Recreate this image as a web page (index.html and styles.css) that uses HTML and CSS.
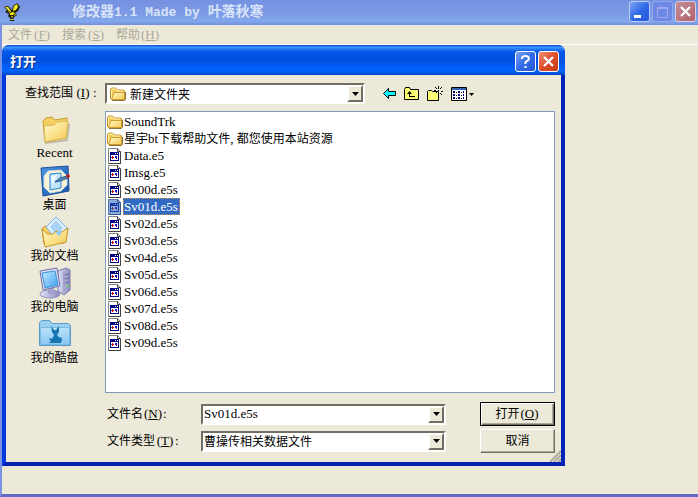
FILE: index.html
```html
<!DOCTYPE html>
<html lang="zh-CN">
<head>
<meta charset="utf-8">
<title>修改器1.1</title>
<link rel="stylesheet" href="styles.css">
</head>
<body>
<svg class="defs" aria-hidden="true">
  <defs>
    <linearGradient id="gold" x1="0" y1="0" x2="1" y2="1"><stop offset="0" stop-color="#fffbd0"/><stop offset="1" stop-color="#f5c94e"/></linearGradient>
    <linearGradient id="sky" x1="0" y1="0" x2="1" y2="1"><stop offset="0" stop-color="#c8ecff"/><stop offset="1" stop-color="#3b9eea"/></linearGradient>
    <linearGradient id="navy" x1="0" y1="0" x2="1" y2="1"><stop offset="0" stop-color="#4b95e4"/><stop offset="1" stop-color="#1653a6"/></linearGradient>
    <linearGradient id="lilac" x1="0" y1="0" x2="1" y2="0"><stop offset="0" stop-color="#e4e4fa"/><stop offset="1" stop-color="#8888bd"/></linearGradient>
    <linearGradient id="ice" x1="0" y1="0" x2="0" y2="1"><stop offset="0" stop-color="#b9e2fa"/><stop offset="1" stop-color="#8ac5f2"/></linearGradient>
    <symbol id="folder" viewBox="0 0 16 16">
      <path d="M2 14.500h12.500l1-1V6" fill="none" stroke="#8b7440"/>
      <path d="M.5 12.500V3.500l1-1.500h4l1.500 2h6.500l1 1v8.500h-13z" fill="#f4cf62" stroke="#c08e20"/>
      <path d="M1.500 12.500V4l1-1h3l1.500 2h6" fill="none" stroke="#fff2ac"/>
      <path d="M1.500 13.500L4 6.500h10.500v7z" fill="url(#gold)" stroke="#cd9c2c"/>
    </symbol>
    <symbol id="file" viewBox="0 0 16 16">
      <path d="M1.500.5h9l3 3v12h-12z" fill="#fff" stroke="#848484"/>
      <path d="M10.500.5v3h3M13.500 4v11.500h-12" fill="none" stroke="#424242"/>
      <path d="M3 4h9v9H3z" fill="#000084"/>
      <path d="M4 7h7v5H4z" fill="#fff"/>
      <path d="M8 5h1v1H8zM10 5h1v1h-1z" fill="#fff"/>
      <path d="M4 9h1v1H4z" fill="#008484"/><path d="M5 8h1v3H5z" fill="#d00000"/><path d="M6 9h1v1H6z" fill="#d00000"/>
      <path d="M8 8h2v2H8z" fill="#1010d0"/><path d="M9 10h1v1H9z" fill="#d00000"/>
    </symbol>
    <symbol id="down" viewBox="0 0 7 4"><path d="M0 0h7L3.500 4z"/></symbol>
  </defs>
</svg>

<div class="window">
  <header class="titlebar">
    <svg class="app-icon" viewBox="0 0 16 18" aria-hidden="true">
      <path d="M0 4l4-1 4 4 1-4 4-3 3 4-2 4-3 2 2 2-3 2-1 2 2 3H5l2-3-3-3 1-2-4-2 2-2z" fill="#1c1c00"/>
      <path d="M1 4l3 0 3 4 0 1-2-1zM9 7l1-4 3-2 1 3-2 3-3 1zM3 8l3 1 0 1zM6 10l3-1 2 1-2 2-3 0zM7 13l2 0-1 2zM10 12l2-1-1 2zM7 16h2v1H7z" fill="#f2e818"/>
      <path d="M11 4l2-1-1 2zM3 5l2 1v1z" fill="#fffcae"/>
    </svg>
    <h1>修改器<b>1.1 Made by </b>叶落秋寒</h1>
    <div class="caption-buttons">
      <button class="cap" aria-label="最小化"><svg viewBox="0 0 19 19"><path d="M4 13h7v3H4z" fill="#fff"/></svg></button>
      <button class="cap cap-off" aria-label="最大化" disabled><svg viewBox="0 0 19 19"><path d="M4.500 5.500h10v10h-10zM4 6.500h11" fill="none" stroke="#a2a8ee"/></svg></button>
      <button class="cap cap-dim" aria-label="关闭"><svg viewBox="0 0 19 19"><path d="M5 5l9 9M14 5l-9 9" stroke="#fff" stroke-width="2.400"/></svg></button>
    </div>
  </header>
  <nav class="menu">
    <span>文件<b class="key">(<u>F</u>)</b></span>
    <span>搜索<b class="key">(<u>S</u>)</b></span>
    <span>帮助<b class="key">(<u>H</u>)</b></span>
  </nav>

  <main class="client">
    <section class="dialog" role="dialog" aria-labelledby="dlg-title">
      <header class="dialog-title">
        <h2 id="dlg-title">打开</h2>
        <button class="cap" aria-label="帮助"><svg viewBox="0 0 19 19"><path d="M6 7V6Q6.500 4 9.500 4T13 6.500Q13 8 11 9T9.500 12" fill="none" stroke="#fff" stroke-width="2"/><path d="M8.500 14h2v2h-2z" fill="#fff"/></svg></button>
        <button class="cap cap-close" aria-label="关闭"><svg viewBox="0 0 19 19"><path d="M5 5l9 9M14 5l-9 9" stroke="#fff" stroke-width="2.400"/></svg></button>
      </header>
      <div class="dialog-body">
        <div class="lookin">
          <label for="place">查找范围<b class="key">(<u>I</u>)</b><b>:</b></label>
          <div class="combo combo-place">
            <svg class="small" aria-hidden="true"><use href="#folder"/></svg>
            <select id="place"><option>新建文件夹</option></select>
            <span class="drop"><svg><use href="#down"/></svg></span>
          </div>
          <div class="tools">
            <button aria-label="后退"><svg width="13" height="11" viewBox="0 0 13 11"><path d="M.5 5.500l5-5v3h7v4h-7v3z" fill="#0ff" stroke="#000"/></svg></button>
            <button aria-label="向上"><svg width="15" height="13" viewBox="0 0 15 13"><path d="M.5 12.500v-10l1-2h4l1 2h8v10z" fill="#ffff73" stroke="#000"/><path d="M5.500 4L3 7h2v3h6V9H6V7h2z" fill="#000"/></svg></button>
            <button aria-label="新建文件夹"><svg width="16" height="15" viewBox="0 0 16 15"><path d="M.5 14.500v-9l1-1h3l1 1h6v9z" fill="#ffff73" stroke="#000"/><path d="M11 0h1v3h-1zM11 7h1v2h-1zM7 4h2v1H7zM14 5h2v1h-2zM8 1h1v1H8zM9 2h1v1H9zM14 1h1v1h-1zM13 2h1v1h-1zM9 6h1v1H9zM13 7h1v1h-1zM14 8h1v1h-1zM11 4h1v1h-1z"/></svg></button>
            <button aria-label="查看"><svg width="24" height="14" viewBox="0 0 24 14"><path d="M.5.5h15v13H.5z" fill="#fff" stroke="#000"/><path d="M1 1h14v2H1z" fill="#3163b5"/><path d="M2 4h2v2H2zM7 4h2v2H7zM12 4h1v2h-1zM2 7h2v2H2zM7 7h2v2H7zM12 7h1v2h-1zM2 10h2v2H2zM7 10h2v2H7zM12 10h1v2h-1z" fill="#000080"/><path d="M5 5h1v1H5zM10 5h1v1h-1zM5 8h1v1H5zM10 8h1v1h-1zM5 11h1v1H5zM10 11h1v1h-1z"/><path d="M18 6h5l-2.500 3z"/></svg></button>
          </div>
        </div>

        <nav class="places">
          <a href="#recent">
            <svg viewBox="0 0 32 32"><path d="M6 29l22-3 2-16" fill="none" stroke="#8f8a73" stroke-width="2" opacity=".5"/><path d="M4 7l3-3 6-1 3 3 12-2v4L26 24 6 28z" fill="#f3cf62" stroke="#c89b2c"/><path d="M5 12l10-1 3-3 11-1-2 17L6 28z" fill="url(#gold)" stroke="#dbb44a"/></svg>
            <b>Recent</b></a>
          <a href="#desktop">
            <svg viewBox="0 0 32 32"><path d="M2 3l27-2 1 25-26 5z" fill="url(#navy)" stroke="#1c509e"/><path d="M9 6l13-1 6 6v9l-6 6-11 2-6-6V11z" fill="#fbf4d4" stroke="#c5d9e8"/><path d="M11 9l11-1v15l-11 2z" fill="#bfe4fb" stroke="#2a85dd"/><path d="M12 11l6-1-5 11z" fill="#eefaff"/><path d="M16 17l5-4 7-2 1 2-8 3z" fill="#5b94c8" stroke="#215380"/><path d="M27 10l3-1 1 3-3 1z" fill="#cd1717"/></svg>
            桌面</a>
          <a href="#documents">
            <svg viewBox="0 0 32 32"><path d="M3 13l3-3 6 2 15 0-2 15L5 28z" fill="#f2cd62" stroke="#c3902a"/><path d="M7 11L17 1l11 11-10 12z" fill="#dff1ff" stroke="#75b5ea"/><path d="M17 4l7 8-7 7-6-8z" fill="#a8d3f7"/><path d="M3 13l5 5 6 0 3-3 4 2 8-5-2 14-21 5z" fill="url(#gold)" stroke="#c89627"/><path d="M16 17l7-3-2 6z" fill="#8ac9f8"/></svg>
            我的文档</a>
          <a href="#computer">
            <svg viewBox="0 0 32 32"><path d="M19 4l8-3 4 2v20l-6 5-6-4z" fill="url(#lilac)" stroke="#7a79ac"/><path d="M25 5v21" stroke="#8c8cb8"/><path d="M26 8l4-1M26 12l4-1M26 16l4-1" stroke="#6464a0"/><path d="M28 18h2v2h-2z" fill="#5bdd53"/><ellipse cx="11" cy="27" rx="10" ry="4" fill="url(#lilac)" stroke="#9090b8"/><path d="M9 21h6l1 6H9z" fill="#a3a2cf"/><path d="M1 4l17-3 3 18-17 4z" fill="#d9d9f3" stroke="#7373a8"/><path d="M3 6l13-2 3 14-13 3z" fill="url(#sky)" stroke="#3b93dc"/></svg>
            我的电脑</a>
          <a href="#kupan">
            <svg viewBox="0 0 32 32"><path d="M.5 27.500v-23l2-2h8l3 3h16l2 2v20z" fill="#9acff2" stroke="#5a9bca"/><path d="M1.500 9.500h29v17h-29z" fill="url(#ice)" stroke="#79bae5"/><path d="M12 8l3 4h2l3-4 0 6-2 3 3 3 1-1 1 2-1 4H10l2-2-2-2 1-1 2 1 2-4-2-3z" fill="#1875b4"/></svg>
            我的酷盘</a>
        </nav>

        <ul class="files">
          <li><svg class="small"><use href="#folder"/></svg><span><b>SoundTrk</b></span></li>
          <li><svg class="small"><use href="#folder"/></svg><span>星宇<b>bt</b>下载帮助文件<b>, </b>都您使用本站资源</span></li>
          <li><svg class="small"><use href="#file"/></svg><span><b>Data.e5</b></span></li>
          <li><svg class="small"><use href="#file"/></svg><span><b>Imsg.e5</b></span></li>
          <li><svg class="small"><use href="#file"/></svg><span><b>Sv00d.e5s</b></span></li>
          <li class="selected"><svg class="small"><use href="#file"/><path d="M1 0h10l3 3v13H1z" fill="#316ac5" opacity=".55"/></svg><span><b>Sv01d.e5s</b></span></li>
          <li><svg class="small"><use href="#file"/></svg><span><b>Sv02d.e5s</b></span></li>
          <li><svg class="small"><use href="#file"/></svg><span><b>Sv03d.e5s</b></span></li>
          <li><svg class="small"><use href="#file"/></svg><span><b>Sv04d.e5s</b></span></li>
          <li><svg class="small"><use href="#file"/></svg><span><b>Sv05d.e5s</b></span></li>
          <li><svg class="small"><use href="#file"/></svg><span><b>Sv06d.e5s</b></span></li>
          <li><svg class="small"><use href="#file"/></svg><span><b>Sv07d.e5s</b></span></li>
          <li><svg class="small"><use href="#file"/></svg><span><b>Sv08d.e5s</b></span></li>
          <li><svg class="small"><use href="#file"/></svg><span><b>Sv09d.e5s</b></span></li>
        </ul>

        <form class="fields">
          <label for="fname">文件名<b class="key">(<u>N</u>)</b><b>:</b></label>
          <div class="combo">
            <input id="fname" type="text" value="Sv01d.e5s">
            <span class="drop"><svg><use href="#down"/></svg></span>
          </div>
          <button type="button" class="push push-default">打开<b class="key">(<u>O</u>)</b></button>
          <label for="ftype">文件类型<b class="key">(<u>T</u>)</b><b>:</b></label>
          <div class="combo">
            <select id="ftype"><option>曹操传相关数据文件</option></select>
            <span class="drop"><svg><use href="#down"/></svg></span>
          </div>
          <button type="button" class="push">取消</button>
        </form>
        <svg class="grip" viewBox="0 0 12 12" aria-hidden="true"><path d="M0 12L12 0M4 12l8-8M8 12l4-4" stroke="#fff"/><path d="M1 12L12 1M5 12l7-7M9 12l3-3" stroke="#aca899" stroke-width="2"/></svg>
      </div>
    </section>
  </main>
</div>
</body>
</html>
```
FILE: styles.css
```css
* { box-sizing: border-box; }

:root {
  --face: #ece9d8;
  --shadow: #aca899;
  --cjk: "Noto Sans CJK SC", sans-serif;
}

body {
  margin: 0;
  font: 12px/16px var(--cjk);
  color: #000;
  background: var(--face);
}

b {
  font-family: "Liberation Serif", serif;
  font-size: 13px;
  font-weight: 400;
  white-space: pre;
}

.key { display: inline-block; width: 20px; text-align: center; }

svg { display: block; }
.defs { position: absolute; width: 0; height: 0; }
.small { width: 16px; height: 16px; flex: none; }
button, input, select { font: inherit; color: inherit; border-radius: 0; }
h1, h2 { margin: 0; }

.window {
  display: flex;
  flex-direction: column;
  min-height: 100vh;
  border-left: 2px solid #7b92e2;
  border-bottom: 3px solid #6369c9;
}

.titlebar {
  display: flex;
  align-items: center;
  height: 25px;
  margin-left: -2px;
  padding: 0 2px 2px 4px;
  background: linear-gradient(#7591e2, #7a95e2 30%, #7c9be6 60%, #82a9ec 85%, #758bdd);
}

.app-icon { width: 16px; height: 18px; }

.titlebar h1 {
  flex: 1;
  padding: 0 0 3px 52px;
  font: 700 14px/20px var(--cjk);
  color: #d8e4f8;
}

.titlebar h1 b { font: 700 13px "Liberation Mono", monospace; }
.caption-buttons { display: flex; gap: 2px; }

.cap {
  width: 21px;
  height: 21px;
  padding: 0;
  border: 1px solid #fff;
  border-radius: 3px;
  background: linear-gradient(135deg, #7fa4f5, #316be8 50%, #2458d8);
}

.cap svg { width: 19px; height: 19px; }
.titlebar .cap { border-color: #b9cdf8; }
.titlebar .cap-off { background: #6d89e3; border-color: #8fa9ed; }
.titlebar .cap-dim { background: linear-gradient(135deg, #c5909b, #b26068); border-color: #d8cde4; }
.cap-close { background: linear-gradient(135deg, #f0927a, #df4c29 50%, #c63b16); }

.menu {
  display: flex;
  gap: 10px;
  height: 20px;
  padding: 1px 6px;
  border-bottom: 1px solid #fff;
  color: var(--shadow);
}

.client { flex: 1; padding-right: 133px; }

.dialog {
  border: solid #0038dc;
  border-width: 0 4px 4px;
  border-right-color: #0024b8;
  border-bottom-color: #0020b0;
  border-radius: 7px 7px 0 0;
  background: #0055e5;
}

.dialog-title {
  display: flex;
  align-items: center;
  gap: 2px;
  height: 30px;
  margin: 0 -4px;
  padding: 2px 6px 0 8px;
  border-radius: 7px 7px 0 0;
  background: linear-gradient(#0a4fd0, #3c92ff 8%, #0558e8 22%, #0050e0 50%, #0066ff 85%, #0048c8);
}

.dialog-title h2 {
  flex: 1;
  font: 700 13px/20px var(--cjk);
  color: #fff;
  text-shadow: 1px 1px #0a2a80;
}

.dialog-body {
  position: relative;
  display: grid;
  grid-template-columns: 99px 1fr;
  padding: 8px 6px 9px 0;
  background: var(--face);
}

.lookin {
  grid-column: 1 / -1;
  display: flex;
  align-items: center;
  height: 28px;
  padding: 0 0 7px 19px;
}

.lookin label { width: 80px; padding-bottom: 3px; }

.combo {
  display: flex;
  align-items: center;
  height: 21px;
  padding-left: 1px;
  border: 2px solid;
  border-color: #716f64 #fff #fff #716f64;
  background: #fff;
}

.combo-place { flex: 1; max-width: 260px; padding-left: 3px; }

.combo select, .combo input {
  flex: 1;
  min-width: 0;
  height: 17px;
  padding: 0;
  border: 0;
  outline: 0;
  appearance: none;
  background: transparent;
}

.combo-place select { padding-left: 4px; }
.combo input { font: 13px "Liberation Serif", serif; }

.drop {
  display: grid;
  place-items: center;
  width: 16px;
  height: 17px;
  border: 2px solid;
  border-color: #fff #716f64 #716f64 #fff;
  background: var(--face);
}

.drop svg { width: 7px; height: 4px; }

.tools { display: flex; align-items: center; gap: 8px; padding-left: 18px; }
.tools button { padding: 0; border: 0; background: none; }

.places { padding-top: 3px; }

.places a {
  display: flex;
  flex-direction: column;
  align-items: center;
  height: 51px;
  padding-right: 2px;
  line-height: 14px;
  color: #000;
  text-decoration: none;
}

.places svg { width: 32px; height: 32px; }

.files {
  min-height: 282px;
  margin: 0;
  padding: 1px;
  list-style: none;
  border: 1px solid #7f9db9;
  background: #fff;
}

.files li { display: flex; align-items: center; height: 17px; }
.files span { height: 17px; padding: 0 2px 0 1px; line-height: 15px; }
.files .selected span { color: #fff; background: #316ac5; outline: 1px dotted #dc9440; outline-offset: -1px; }

.fields {
  grid-column: 2;
  display: grid;
  grid-template-columns: 94px minmax(0, 1fr) 75px;
  gap: 3px 0;
  align-items: center;
  padding: 9px 0 0 2px;
}

.fields label { padding-bottom: 2px; }
.fields .combo { margin-right: 34px; }

.push {
  height: 24px;
  padding: 0 0 2px;
  border: 1px solid;
  border-color: #fff #716f64 #716f64 #fff;
  background: var(--face);
  box-shadow: inset -1px -1px var(--shadow);
}

.push-default { border-color: #000; box-shadow: inset 1px 1px #fff, inset -1px -1px #716f64, inset -2px -2px var(--shadow); }

.grip { position: absolute; right: 0; bottom: 0; width: 12px; height: 12px; }
```
